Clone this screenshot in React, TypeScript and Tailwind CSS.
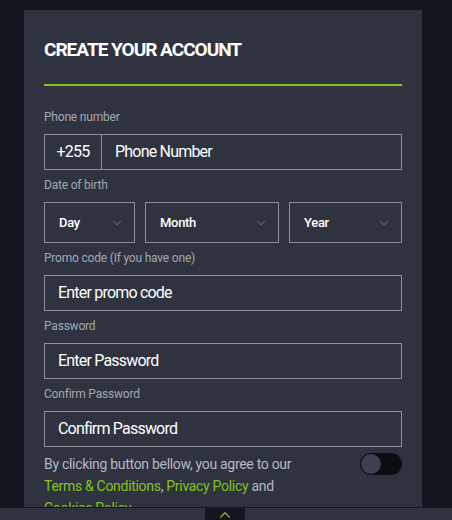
import React from 'react';
import { ChevronDown, ChevronUp } from 'lucide-react';

const Label: React.FC<{ children: React.ReactNode }> = ({ children }) => (
  <div className="text-[12px] leading-[14px] text-[#a3a7b0] tracking-[-0.2px] mb-[10px]">{children}</div>
);

const Field: React.FC<{ placeholder: string }> = ({ placeholder }) => (
  <div className="h-[36px] border border-[#8b8f98] flex items-center px-[13px] text-[16px] text-white tracking-[-0.8px]">
    {placeholder}
  </div>
);

const Select: React.FC<{ label: string; className: string }> = ({ label, className }) => (
  <div className={`h-[41px] border border-[#8b8f98] flex items-center justify-between pl-[14px] pr-[10px] text-[13px] font-medium text-white tracking-[-0.3px] ${className}`}>
    <span>{label}</span>
    <ChevronDown size={14} strokeWidth={1.2} className="text-[#9a9ea6]" />
  </div>
);

const App: React.FC = () => {
  return (
    <div className="relative w-[452px] h-[520px] overflow-hidden bg-[#13161e]" style={{ fontFamily: 'Roboto, "Liberation Sans", sans-serif' }}>
      <div className="ml-[24px] mt-[10px] w-[398px] h-[510px] bg-[#2e333f] px-[20px] pt-[29px]">
        <h1 className="text-[19px] leading-[22px] font-bold text-white uppercase tracking-[-1px]">Create your account</h1>
        <div className="mt-[23px] h-[2px] bg-[#86c11d]" />

        <div className="mt-[24px]">
          <Label>Phone number</Label>
          <div className="h-[36px] border border-[#8b8f98] flex text-[16px] text-white tracking-[-0.8px]">
            <div className="w-[57px] border-r border-[#8b8f98] flex items-center justify-center">+255</div>
            <div className="flex items-center pl-[13px]">Phone Number</div>
          </div>
        </div>

        <div className="mt-[8px]">
          <Label>Date of birth</Label>
          <div className="flex gap-[10px]">
            <Select label="Day" className="w-[91px]" />
            <Select label="Month" className="w-[134px]" />
            <Select label="Year" className="flex-1" />
          </div>
        </div>

        <div className="mt-[8px]">
          <Label>Promo code (If you have one)</Label>
          <Field placeholder="Enter promo code" />
        </div>

        <div className="mt-[8px]">
          <Label>Password</Label>
          <Field placeholder="Enter Password" />
        </div>

        <div className="mt-[8px]">
          <Label>Confirm Password</Label>
          <Field placeholder="Confirm Password" />
        </div>

        <div className="mt-[6px] flex justify-between">
          <p className="text-[14px] leading-[22px] text-[#b4b8c0] tracking-[-0.3px] w-[270px]">
            By clicking button bellow, you agree to our{' '}
            <span className="text-[#86c11d]">Terms &amp; Conditions</span>,{' '}
            <span className="text-[#86c11d]">Privacy Policy</span> and{' '}
            <span className="text-[#86c11d]">Cookies Policy</span>
          </p>
          <div className="w-[42px] h-[22px] rounded-full bg-[#0c0d11] p-[1px] shrink-0">
            <div className="w-[20px] h-[20px] rounded-full bg-[#3a4150]" />
          </div>
        </div>
      </div>

      <div className="absolute left-0 right-0 bottom-0 h-[13px] bg-[#2e333f] border-t border-[#14161d]">
        <div className="absolute left-[205px] top-0 w-[40px] h-[13px] bg-[#13161e] flex justify-center">
          <ChevronUp size={18} strokeWidth={1.5} className="text-[#86c11d] -mt-[2px]" />
        </div>
      </div>
    </div>
  );
};

export default App;
